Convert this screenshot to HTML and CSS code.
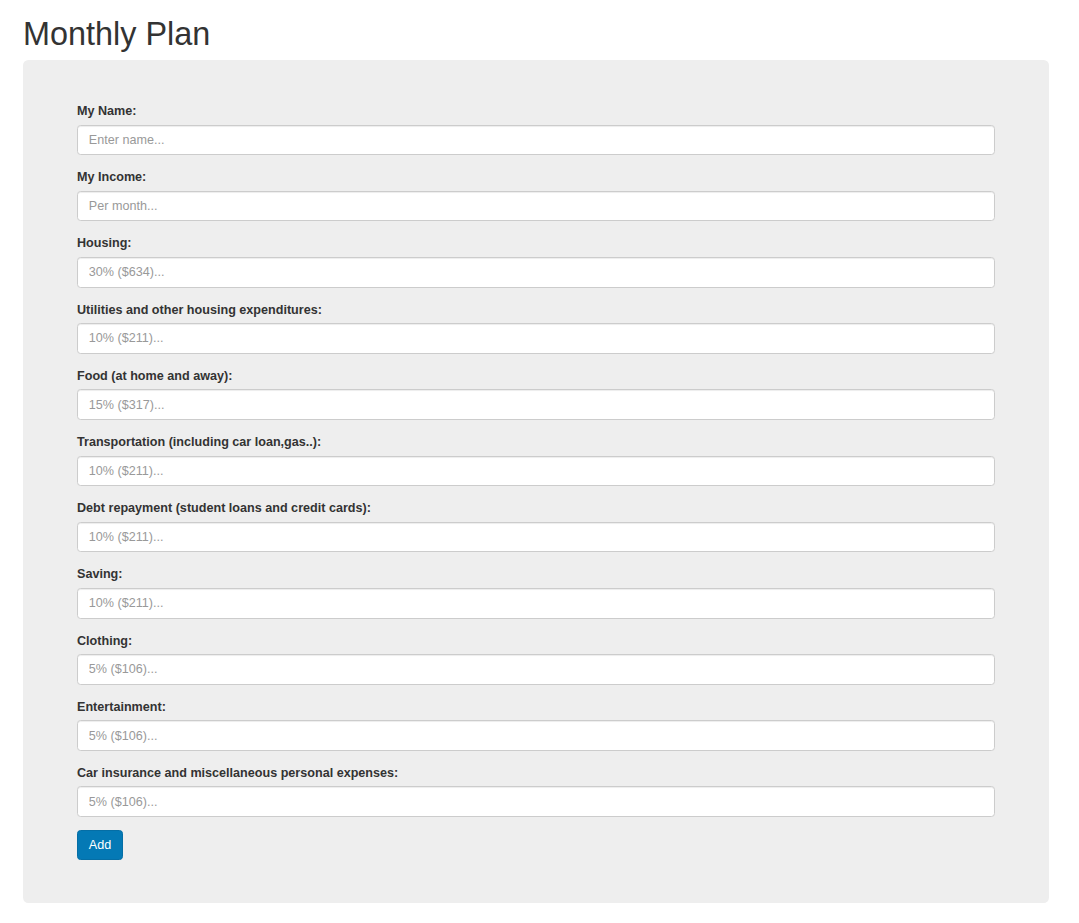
FILE: index.html
```html
<!DOCTYPE html>
<html lang="en">
<head>
<meta charset="utf-8">
<title>Monthly Plan</title>
<link rel="stylesheet" href="styles.css">
</head>
<body>
<div class="page">
  <h1 class="title">Monthly Plan</h1>
  <div class="panel">
    <form class="plan-form">
      <div class="group">
        <label class="label" for="name">My Name:</label>
        <input class="field" id="name" type="text" placeholder="Enter name...">
      </div>
      <div class="group">
        <label class="label" for="income">My Income:</label>
        <input class="field" id="income" type="text" placeholder="Per month...">
      </div>
      <div class="group">
        <label class="label" for="housing">Housing:</label>
        <input class="field" id="housing" type="text" placeholder="30% ($634)...">
      </div>
      <div class="group">
        <label class="label" for="utilities">Utilities and other housing expenditures:</label>
        <input class="field" id="utilities" type="text" placeholder="10% ($211)...">
      </div>
      <div class="group">
        <label class="label" for="food">Food (at home and away):</label>
        <input class="field" id="food" type="text" placeholder="15% ($317)...">
      </div>
      <div class="group">
        <label class="label" for="transport">Transportation (including car loan,gas..):</label>
        <input class="field" id="transport" type="text" placeholder="10% ($211)...">
      </div>
      <div class="group">
        <label class="label" for="debt">Debt repayment (student loans and credit cards):</label>
        <input class="field" id="debt" type="text" placeholder="10% ($211)...">
      </div>
      <div class="group">
        <label class="label" for="saving">Saving:</label>
        <input class="field" id="saving" type="text" placeholder="10% ($211)...">
      </div>
      <div class="group">
        <label class="label" for="clothing">Clothing:</label>
        <input class="field" id="clothing" type="text" placeholder="5% ($106)...">
      </div>
      <div class="group">
        <label class="label" for="entertainment">Entertainment:</label>
        <input class="field" id="entertainment" type="text" placeholder="5% ($106)...">
      </div>
      <div class="group">
        <label class="label" for="insurance">Car insurance and miscellaneous personal expenses:</label>
        <input class="field" id="insurance" type="text" placeholder="5% ($106)...">
      </div>
      <button class="btn" type="button">Add</button>
    </form>
  </div>
</div>
</body>
</html>
```

FILE: styles.css
```css
* {
  box-sizing: border-box;
}

html, body {
  margin: 0;
  padding: 0;
  background: #fff;
}

body {
  font-family: "Liberation Sans", Arial, Helvetica, sans-serif;
  color: #333;
  font-size: 12.6px;
}

.page {
  margin: 0 30px 0 23px;
  padding-bottom: 20px;
}

.title {
  margin: 16px 0 8px 0;
  font-size: 32.4px;
  line-height: 36px;
  font-weight: 500;
  color: #333;
}

.panel {
  background: #eee;
  border-radius: 5.4px;
  padding: 42px 54px 43px 54px;
}

.plan-form {
  display: flex;
  flex-direction: column;
}

.group {
  display: flex;
  flex-direction: column;
  margin-bottom: 13px;
}

.label {
  display: block;
  font-size: 12.6px;
  font-weight: 700;
  line-height: 18px;
  margin-bottom: 4.6px;
  color: #333;
}

.field {
  display: block;
  width: 100%;
  height: 30.6px;
  padding: 5.4px 10.8px;
  font-family: "Liberation Sans", Arial, Helvetica, sans-serif;
  font-size: 12.6px;
  line-height: 18px;
  color: #555;
  background: #fff;
  border: 1px solid #ccc;
  border-radius: 3.6px;
  box-shadow: inset 0 1px 1px rgba(0, 0, 0, 0.075);
  outline: none;
}

.field::placeholder {
  color: #999;
  opacity: 1;
}

.btn {
  align-self: flex-start;
  height: 30px;
  padding: 0 10.8px;
  font-family: "Liberation Sans", Arial, Helvetica, sans-serif;
  font-size: 12.6px;
  line-height: 18px;
  color: #fff;
  background: #0479b5;
  border: 1px solid #056ea5;
  border-radius: 3.6px;
  cursor: pointer;
}
```
